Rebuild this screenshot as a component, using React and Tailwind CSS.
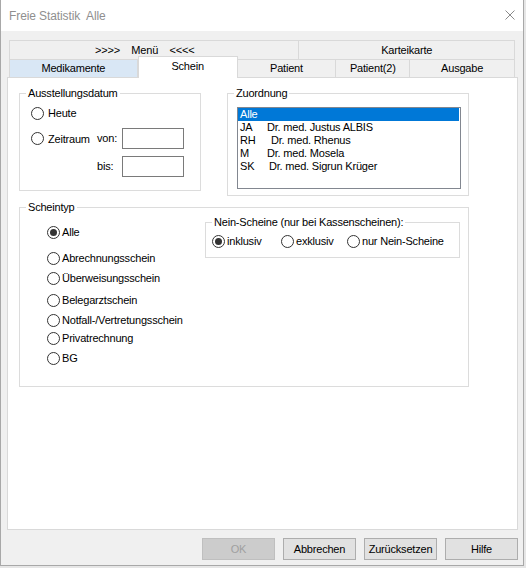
import React from 'react';

const Radio = ({ checked, label, gap = 'gap-[2px]', className = '' }) => (
    <div className={`flex items-center h-[14px] ${gap} ${className}`}>
        <span className="w-[13px] h-[13px] shrink-0 rounded-full border border-[#333333] bg-white flex items-center justify-center">
            {checked && <span className="w-[7px] h-[7px] rounded-full bg-[#333333]" />}
        </span>
        <span className="leading-[14px] whitespace-nowrap">{label}</span>
    </div>
);

const Group = ({ title, className = '', children }) => (
    <fieldset className={`border border-[#dcdcdc] ${className}`}>
        <legend className="ml-[6px] px-[2px] leading-[14px]">{title}</legend>
        {children}
    </fieldset>
);

const Button = ({ children, disabled }) => (
    <button
        className={`w-[73px] h-[22px] border leading-[20px] text-center ${
            disabled ? 'bg-[#cccccc] border-[#bfbfbf] text-[#a0a0a0]' : 'bg-[#e1e1e1] border-[#adadad] text-black'
        }`}
    >
        {children}
    </button>
);

const doctors = [
    { code: 'JA', name: 'Dr. med. Justus ALBIS', ml: 'ml-[27px]' },
    { code: 'RH', name: 'Dr. med. Rhenus', ml: 'ml-[31px]' },
    { code: 'M', name: 'Dr. med. Mosela', ml: 'ml-[27px]' },
    { code: 'SK', name: 'Dr. med. Sigrun Krüger', ml: 'ml-[29px]' },
];

const scheinTypen = [
    { label: 'Alle', checked: true, mt: 'mt-0' },
    { label: 'Abrechnungsschein', mt: 'mt-[12px]' },
    { label: 'Überweisungsschein', mt: 'mt-[6px]' },
    { label: 'Belegarztschein', mt: 'mt-[8px]' },
    { label: 'Notfall-/Vertretungsschein', mt: 'mt-[6px]' },
    { label: 'Privatrechnung', mt: 'mt-[4px]' },
    { label: 'BG', mt: 'mt-[6px]' },
];

export default function App() {
    return (
        <div className="w-[526px] h-[568px] bg-[#e6e6e6] overflow-hidden font-['Liberation_Sans',Arial,sans-serif] text-[11px] tracking-[-0.2px] text-black">
            <div className="w-[524px] h-[566px] bg-[#f0f0f0] border-l border-r border-b border-[#a8a8a8] flex flex-col">
                {/* title bar */}
                <div className="h-[31px] shrink-0 bg-white flex items-center justify-between pl-[8px] pr-[8px]">
                    <span className="text-[12px] tracking-[-0.1px] text-[#8f8f8f] whitespace-pre">Freie Statistik  Alle</span>
                    <svg width="10" height="10" viewBox="0 0 10 10" className="mb-[1px]">
                        <path d="M0.5 0.5 L9.5 9.5 M9.5 0.5 L0.5 9.5" stroke="#8a8a8a" strokeWidth="1" />
                    </svg>
                </div>

                {/* tabs */}
                <div className="mt-[9px] ml-[8px] w-[506px]">
                    <div className="flex h-[19px] border-t border-l border-[#d9d9d9]">
                        <div className="w-[290px] border-r border-[#d9d9d9] flex items-center justify-center pr-[19px] whitespace-pre">
                            {'>>>>    Menü    <<<<'}
                        </div>
                        <div className="w-[216px] border-r border-[#d9d9d9] flex items-center justify-center">Karteikarte</div>
                    </div>
                    <div className="flex h-[18px] border-t border-l border-[#d9d9d9]">
                        <div className="w-[128px] bg-[#d9e7f5] border-r border-[#d9d9d9] flex items-center justify-center">Medikamente</div>
                        <div className="relative z-10 w-[100px] h-[22px] -mt-[4px] bg-white border border-b-0 border-[#d9d9d9] flex items-center justify-center pb-[2px]">
                            Schein
                        </div>
                        <div className="w-[99px] border-r border-[#d9d9d9] flex items-center justify-center">Patient</div>
                        <div className="w-[74px] border-r border-[#d9d9d9] flex items-center justify-center">Patient(2)</div>
                        <div className="w-[105px] border-r border-[#d9d9d9] flex items-center justify-center">Ausgabe</div>
                    </div>
                </div>

                {/* tab page */}
                <div className="ml-[6px] w-[511px] h-[453px] bg-white border border-[#d9d9d9]">
                    <div className="flex items-start mt-[8px] ml-[11px]">
                        <Group title="Ausstellungsdatum" className="w-[182px] h-[105px]">
                            <div className="pl-[11px] mt-[6px]">
                                <Radio label="Heute" gap="gap-[4px]" />
                                <div className="flex items-center h-[21px] mt-[8px]">
                                    <Radio label="Zeitraum" gap="gap-[4px]" className="w-[66px]" />
                                    <span className="w-[25px]">von:</span>
                                    <div className="w-[62px] h-[21px] border border-[#7a7a7a] bg-white" />
                                </div>
                                <div className="flex items-center h-[21px] mt-[7px] pl-[66px]">
                                    <span className="w-[25px]">bis:</span>
                                    <div className="w-[62px] h-[21px] border border-[#7a7a7a] bg-white" />
                                </div>
                            </div>
                        </Group>

                        <Group title="Zuordnung" className="ml-[26px] w-[242px] h-[110px]">
                            <div className="ml-[9px] mt-[7px] w-[224px] h-[82px] border border-[#828790] bg-white">
                                <div className="h-[13px] mr-[1px] bg-[#0078d7] text-white pl-[2px] leading-[13px]">Alle</div>
                                {doctors.map((d) => (
                                    <div key={d.code} className="h-[13px] pl-[2px] leading-[13px] flex whitespace-nowrap">
                                        <span className="w-0">{d.code}</span>
                                        <span className={d.ml}>{d.name}</span>
                                    </div>
                                ))}
                            </div>
                        </Group>
                    </div>

                    <Group title="Scheintyp" className="mt-[4px] ml-[11px] w-[450px] h-[187px]">
                        <div className="flex items-start justify-between mt-[1px]">
                            <div className="pl-[27px] pt-[10px]">
                                {scheinTypen.map((s) => (
                                    <Radio key={s.label} label={s.label} checked={s.checked} className={s.mt} />
                                ))}
                            </div>
                            <Group title="Nein-Scheine (nur bei Kassenscheinen):" className="mr-[8px] w-[255px] h-[43px]">
                                <div className="flex items-center pl-[6px] mt-[5px]">
                                    <Radio label="inklusiv" checked gap="gap-[2px]" className="w-[69px]" />
                                    <Radio label="exklusiv" gap="gap-[2px]" className="w-[66px]" />
                                    <Radio label="nur Nein-Scheine" gap="gap-[2px]" />
                                </div>
                            </Group>
                        </div>
                    </Group>
                </div>

                {/* buttons */}
                <div className="flex justify-end gap-[8px] mt-[8px] pr-[5px]">
                    <Button disabled>OK</Button>
                    <Button>Abbrechen</Button>
                    <Button>Zurücksetzen</Button>
                    <Button>Hilfe</Button>
                </div>
            </div>
        </div>
    );
}
